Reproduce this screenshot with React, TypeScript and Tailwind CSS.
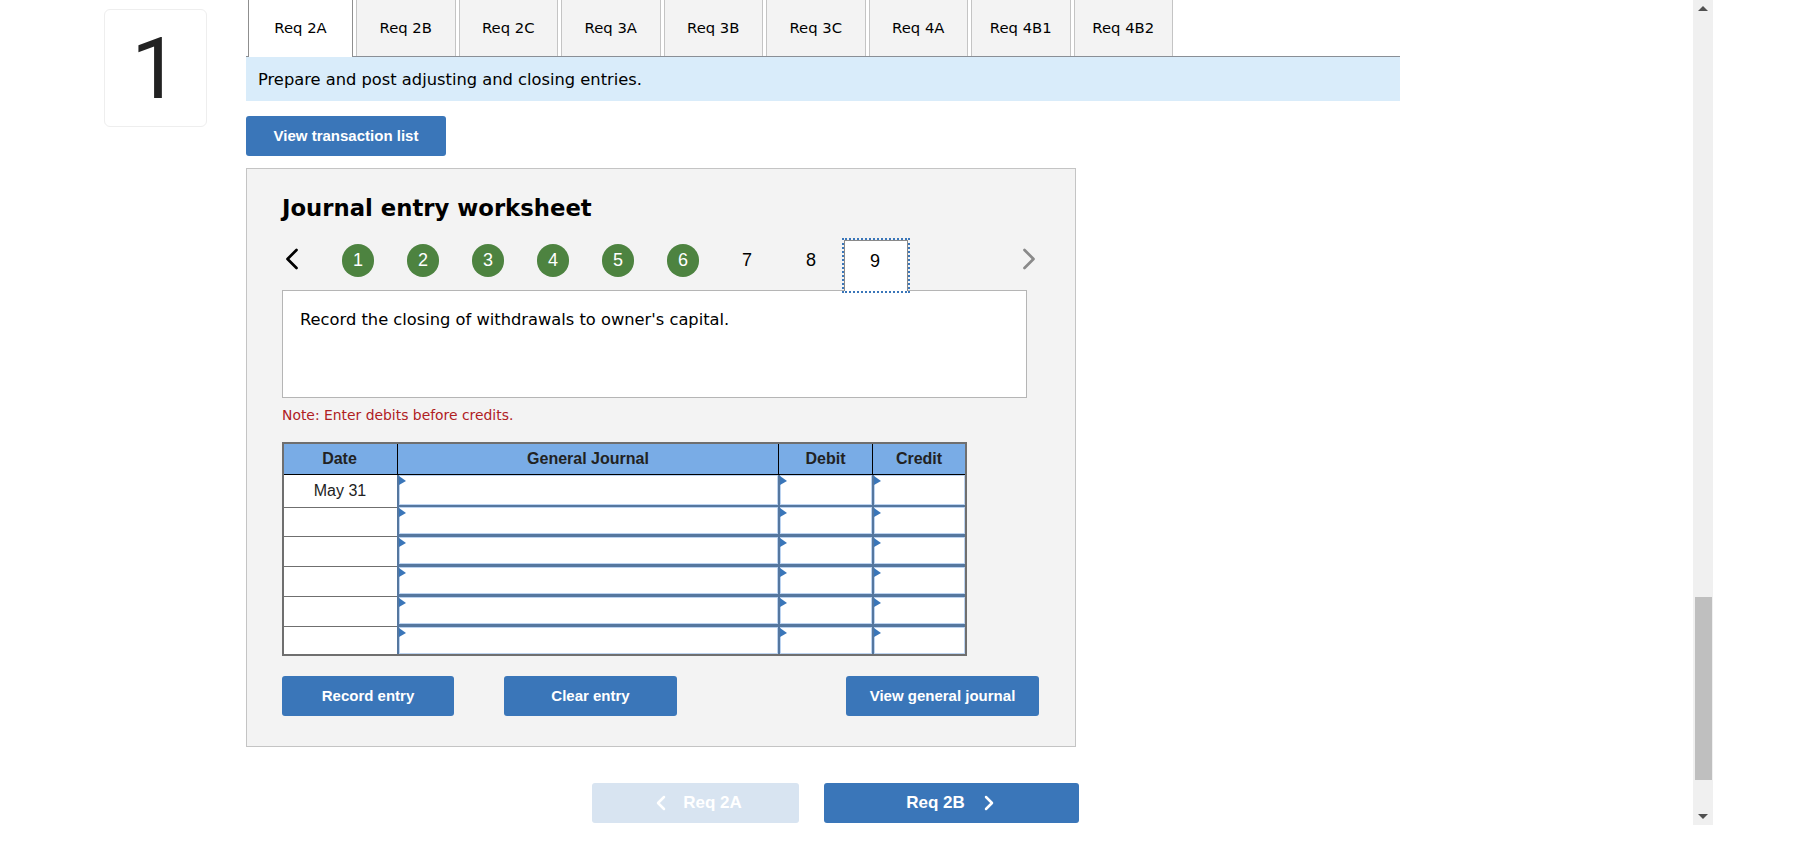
import { ChevronLeft, ChevronRight } from 'lucide-react';

const tabs = ['Req 2A', 'Req 2B', 'Req 2C', 'Req 3A', 'Req 3B', 'Req 3C', 'Req 4A', 'Req 4B1', 'Req 4B2'];
const done = [1, 2, 3, 4, 5, 6];
const rows = ['May 31', '', '', '', '', ''];

function EntryCell({ last }: { last: boolean }) {
  return (
    <div className={`relative h-full bg-white border-l-2 border-[#55779f] shadow-[inset_0_0_0_1px_#bcd3f0] ${last ? '' : 'border-b-[3px]'}`}>
      <span className="absolute left-0 top-[1px] w-0 h-0 border-t-[5px] border-b-[4px] border-y-transparent border-l-[7px] border-l-[#3a76b9]" />
    </div>
  );
}

export default function App() {
  return (
    <div className="flex h-[842px] bg-white overflow-hidden font-['DejaVu_Sans',sans-serif] text-black">
      <div className="w-[246px] shrink-0 pl-[104px] pt-[9px]">
        <div className="w-[103px] h-[118px] rounded-md border border-[#eeeeee] flex items-center justify-center text-[86px] text-[#222] font-['Roboto',sans-serif]">
          1
        </div>
      </div>

      <div className="w-[1154px] shrink-0">
        <div className="flex gap-[3px] h-[57px] border-b border-[#8a8f96] pl-[2px] text-[14.8px]">
          {tabs.map((t, i) => (
            <div
              key={t}
              className={`flex items-center justify-center border-x ${i === 0 ? 'w-[105px] h-[57px] bg-white border-[#8f8f8f]' : 'w-[99.5px] h-[56px] bg-[#f3f3f3] border-[#c4c4c4]'}`}
            >
              {t}
            </div>
          ))}
        </div>
        <div className="h-[44px] bg-[#d9ecfa] flex items-center pl-3 pt-[2px] text-[16.3px]">Prepare and post adjusting and closing entries.</div>

        <button className="mt-[15px] w-[200px] h-10 rounded-[3px] bg-[#3a76b9] text-white text-[15px] font-bold font-['Liberation_Sans',sans-serif]">
          View transaction list
        </button>

        <div className="mt-3 w-[830px] h-[579px] bg-[#f3f3f3] border border-[#c4c4c4] pl-[35px] pt-[21px]">
          <h2 className="text-[22.75px] font-bold leading-9">Journal entry worksheet</h2>

          <div className="mt-[12px] flex items-start h-[55px] w-[745px] font-['Liberation_Sans',sans-serif] text-[18px]">
            <div className="w-[60px] shrink-0 mt-[3px]">
              <ChevronLeft className="w-9 h-9 -ml-[8px]" strokeWidth={1.8} />
            </div>
            {done.map((n) => (
              <div key={n} className="w-[65px] shrink-0 mt-[6px]">
                <div className="w-8 h-[33px] rounded-full bg-[#4d8340] text-white flex items-center justify-center">{n}</div>
              </div>
            ))}
            <div className="w-[64px] shrink-0 mt-[6px] h-[33px] leading-[33px]">
              <div className="w-[30px] text-center">7</div>
            </div>
            <div className="w-[48px] shrink-0 mt-[6px] h-[33px] leading-[33px]">
              <div className="w-[30px] text-center">8</div>
            </div>
            <div className="relative z-10 mt-[2px] w-[64px] h-[51px] bg-white border border-b-0 border-[#8a8a8a] outline-2 outline-dotted outline-[#3a76b9] flex justify-center">
              <span className="mt-[4px] leading-[33px] -ml-[2px]">9</span>
            </div>
            <div className="ml-auto -mr-[20px] mt-[3px]">
              <ChevronRight className="w-9 h-9 text-[#8a8a8a]" strokeWidth={1.8} />
            </div>
          </div>

          <div className="mt-[-3px] w-[745px] h-[108px] bg-white border border-[#b5b5b5] px-[17px] pt-[17px] text-[16.3px] leading-6">
            Record the closing of withdrawals to owner's capital.
          </div>

          <p className="mt-[7px] text-[13.9px] leading-5 text-[#b0201f]">Note: Enter debits before credits.</p>

          <div className="mt-[17px] w-[685px] border-2 border-[#6f6f6f] font-['Liberation_Sans',sans-serif] text-[16px]">
            <div className="grid grid-cols-[114px_381px_94px_92px] h-[31px] bg-[#79ace6] border-b border-black font-bold text-[#222] text-center">
              <div className="border-r border-black leading-[29px] pr-[2px]">Date</div>
              <div className="border-r border-black leading-[29px]">General Journal</div>
              <div className="border-r border-black leading-[29px]">Debit</div>
              <div className="leading-[29px]">Credit</div>
            </div>
            {rows.map((d, i) => (
              <div key={i} className={`grid grid-cols-[113px_381px_94px_93px] bg-white ${i === 0 ? 'h-[32px]' : i === 5 ? 'h-[27px]' : 'h-[30px]'}`}>
                <div className={`text-center pr-px text-[#222] ${i === 0 ? 'leading-[32px]' : 'leading-[30px]'} ${i < 5 ? 'border-b border-[#6f6f6f]' : ''}`}>{d}</div>
                <EntryCell last={i === 5} />
                <EntryCell last={i === 5} />
                <EntryCell last={i === 5} />
              </div>
            ))}
          </div>

          <div className="mt-5 w-[757px] flex font-['Liberation_Sans',sans-serif] text-[15px] font-bold text-white">
            <button className="w-[172px] h-10 rounded-[3px] bg-[#3a76b9]">Record entry</button>
            <button className="ml-[50px] w-[173px] h-10 rounded-[3px] bg-[#3a76b9]">Clear entry</button>
            <button className="ml-auto w-[193px] h-10 rounded-[3px] bg-[#3a76b9]">View general journal</button>
          </div>
        </div>

        <div className="mt-9 ml-[346px] flex gap-[25px] font-['Liberation_Sans',sans-serif] text-[17px] font-bold text-white">
          <button className="w-[207px] h-10 rounded-[3px] bg-[#d8e4f1] flex items-center justify-center gap-[10px]">
            <ChevronLeft className="w-6 h-6" strokeWidth={2.5} /> Req 2A
          </button>
          <button className="w-[255px] h-10 rounded-[3px] bg-[#3a76b9] flex items-center justify-center gap-[12px] pl-[4px]">
            Req 2B <ChevronRight className="w-6 h-6" strokeWidth={2.5} />
          </button>
        </div>
      </div>

      <div className="ml-[293px] w-5 h-[825px] bg-[#f0f0f0] flex flex-col items-center justify-between py-[6px] relative">
        <span className="w-0 h-0 border-x-[5px] border-x-transparent border-b-[5px] border-b-[#505050]" />
        <span className="absolute left-[2px] top-[597px] w-[17px] h-[183px] bg-[#bfbfbf]" />
        <span className="w-0 h-0 border-x-[5px] border-x-transparent border-t-[5px] border-t-[#505050]" />
      </div>
    </div>
  );
}
